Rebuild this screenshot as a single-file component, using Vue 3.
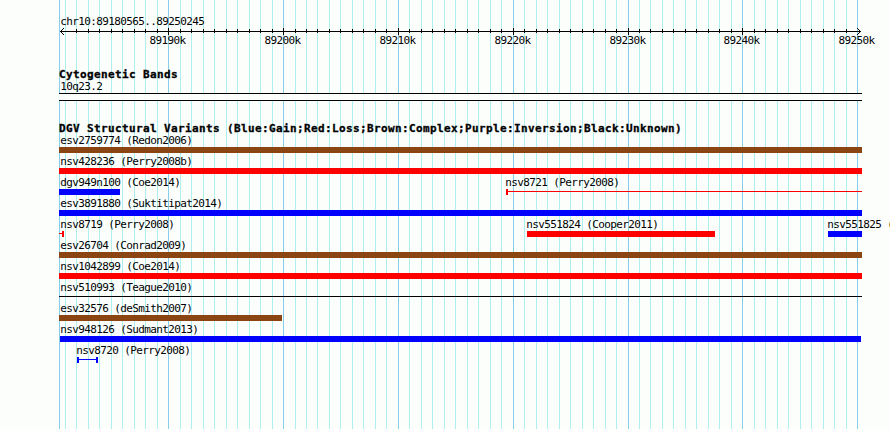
<template>
  <div class="browser">
    <!-- 背景网格线 -->
    <svg class="grid" width="890" height="429" shape-rendering="crispEdges">
      <rect class="major" x="59" y="0" width="1" height="429" />
      <rect
        v-for="line in gridLines"
        :key="line.x"
        :class="line.major ? 'major' : 'minor'"
        :x="line.x"
        y="0"
        width="1"
        height="429"
      />
    </svg>

    <div class="tracks">
      <div class="label region">chr10:89180565..89250245</div>

      <!-- 坐标轴 -->
      <svg class="axis" width="831" height="24" shape-rendering="crispEdges">
        <rect x="1" y="6" width="801" height="1" />
        <rect
          v-for="line in ticks"
          :key="line.x"
          :x="line.x - 59"
          :y="line.major ? 3 : 4"
          width="1"
          :height="line.major ? 7 : 4"
        />
        <path d="M5 3h-1v1h-1v1h-1v1h-1v1h1v1h1v1h1v1h1v-1h-1v-1h-1v-1h-1v-1h1v-1h1v-1h1z" />
        <path d="M798 3h1v1h1v1h1v1h1v1h-1v1h-1v1h-1v1h-1v-1h1v-1h1v-1h1v-1h-1v-1h-1v-1h-1z" />
        <text
          v-for="line in majorLines"
          :key="line.x"
          class="tick-text"
          :x="line.x - 77.6"
          y="19"
        >{{ line.text }}</text>
      </svg>

      <div class="title bands-title">Cytogenetic Bands</div>
      <div class="label band-name">10q23.2</div>
      <div class="band"></div>

      <div class="title variants-title">DGV Structural Variants (Blue:Gain;Red:Loss;Brown:Complex;Purple:Inversion;Black:Unknown)</div>

      <div v-for="(row, i) in rows" :key="i" class="row">
        <div
          v-for="item in row"
          :key="item.name"
          class="feature"
          :style="{ marginLeft: item.start - 59 + 'px' }"
        >
          <div class="label" :style="{ textIndent: (item.shift || 0) + 'px' }">{{ item.name }}</div>
          <div
            :class="['glyph', item.type || 'bar', item.color]"
            :style="{ width: item.end - item.start + 'px' }"
          ></div>
        </div>
      </div>
    </div>
  </div>
</template>

<script setup>
import { computed } from 'vue'

defineOptions({ name: 'VariantBrowser' })

// 每 1k 碱基约 11.483 像素，89190k 位于 168.7
const gridLines = computed(() => {
  const lines = []
  for (let n = -9; n <= 60; n++) {
    lines.push({
      x: Math.floor(168.7 + n * 11.483),
      major: n % 10 === 0,
      text: 89190 + n + 'k'
    })
  }
  return lines
})

// 首尾刻度与箭头重叠，不绘制
const ticks = computed(() => gridLines.value.slice(1, -1))
const majorLines = computed(() => gridLines.value.filter(line => line.major))

// shift 为标签相对图形起点的偏移
const rows = [
  [{ name: 'esv2759774 (Redon2006)', start: 59, end: 862, color: 'brown', shift: 1 }],
  [{ name: 'nsv428236 (Perry2008b)', start: 59, end: 862, color: 'red', shift: 1 }],
  [
    { name: 'dgv949n100 (Coe2014)', start: 59, end: 120, color: 'blue', shift: 1 },
    { name: 'nsv8721 (Perry2008)', start: 506, end: 862, color: 'red', type: 'span open-right', shift: -1 }
  ],
  [{ name: 'esv3891880 (Suktitipat2014)', start: 59, end: 862, color: 'blue', shift: 1 }],
  [
    { name: 'nsv8719 (Perry2008)', start: 59, end: 64, color: 'red', type: 'span open-left', shift: 1 },
    { name: 'nsv551824 (Cooper2011)', start: 527, end: 715, color: 'red', shift: -1 },
    { name: 'nsv551825 (Cooper2011)', start: 828, end: 862, color: 'blue', shift: -1 }
  ],
  [{ name: 'esv26704 (Conrad2009)', start: 59, end: 862, color: 'brown', shift: 1 }],
  [{ name: 'nsv1042899 (Coe2014)', start: 59, end: 862, color: 'red', shift: 1 }],
  [{ name: 'nsv510993 (Teague2010)', start: 59, end: 862, color: 'black', type: 'line', shift: 1 }],
  [{ name: 'esv32576 (deSmith2007)', start: 59, end: 282, color: 'brown', shift: 1 }],
  [{ name: 'nsv948126 (Sudmant2013)', start: 60, end: 861, color: 'blue', shift: 0 }],
  [{ name: 'nsv8720 (Perry2008)', start: 77, end: 98, color: 'blue', type: 'span', shift: -1 }]
]
</script>

<style>
body {
  background: #fcfefc;
}
</style>

<style scoped>
.browser {
  position: relative;
  width: 890px;
  height: 429px;
  overflow: hidden;
  color: #000;
  background: #fcfefc;
  font-family: "DejaVu Sans Mono", monospace;
}

.grid {
  position: absolute;
  top: 0;
  left: 0;
}

.major {
  fill: #87ceeb;
}

.minor {
  fill: #afeeee;
}

.tracks {
  position: relative;
  display: flex;
  flex-direction: column;
  padding: 15px 0 0 59px;
}

.label {
  height: 13px;
  padding-left: 0.3px;
  font-size: 11px;
  line-height: 13px;
  letter-spacing: -0.623px;
  white-space: pre;
}

.title {
  height: 13px;
  font-size: 11px;
  font-weight: bold;
  line-height: 13px;
  letter-spacing: 0.377px;
  white-space: pre;
  -webkit-text-stroke: 0.3px #000;
}

.region {
  height: 10px;
  padding-left: 1.3px;
}

.axis {
  display: block;
  overflow: visible;
}

.tick-text {
  font-size: 11px;
  letter-spacing: -0.623px;
}

.bands-title {
  margin-top: 19px;
}

.band-name {
  height: 13px;
  margin-top: -1px;
  padding-left: 1.3px;
}

.band {
  width: 803px;
  height: 6px;
  border-top: 1px solid #000;
  border-bottom: 1px solid #000;
  background: #fcfefc;
}

.variants-title {
  height: 12px;
  margin-top: 21px;
}

.row {
  display: grid;
  grid-template-columns: 831px;
  height: 21px;
}

.feature {
  grid-area: 1 / 1;
}

.glyph {
  position: relative;
  box-sizing: border-box;
  height: 6px;
  color: #000;
}

.glyph.brown {
  color: #8b4513;
}

.glyph.red {
  color: #f00;
}

.glyph.blue {
  color: #00f;
}

.bar {
  background: currentColor;
}

.line,
.span {
  background: linear-gradient(currentColor, currentColor) 0 2px / 100% 1px no-repeat;
}

.span {
  border-right: 2px solid currentColor;
  border-left: 2px solid currentColor;
}

.open-right {
  border-right: 0;
}

.open-left {
  border-left: 0;
}
</style>
